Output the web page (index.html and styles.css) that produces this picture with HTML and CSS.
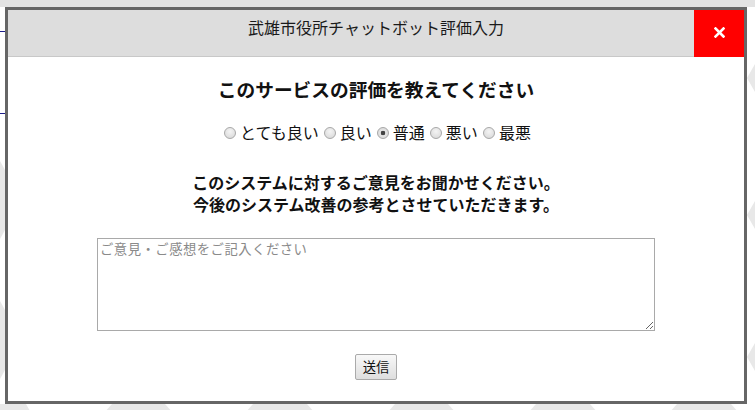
FILE: index.html
```html
<!DOCTYPE html>
<html>
<head>
    <title>武雄市役所チャットボット評価入力</title>
    <link rel="stylesheet" href="styles.css">
</head>
<body>
    <!-- page behind the dialog -->
    <svg class="backdrop" width="755" height="410" viewBox="0 0 755 410">
        <rect x="0" y="0" width="755" height="7" fill="#e3e3e3"/>
        <line x1="0" y1="31.5" x2="6" y2="31.5" stroke="#1c1c8a"/>
        <line x1="0" y1="113.5" x2="6" y2="113.5" stroke="#1c1c8a"/>
        <g fill="#e8e8e8">
            <polygon points="747,78 763,50 795,50 811,78 795,106 763,106"/>
            <polygon points="747,215 763,187 795,187 811,215 795,243 763,243"/>
            <polygon points="747,357 763,329 795,329 811,357 795,385 763,385"/>
            <polygon points="-10,404 26,404 42,432 26,460 -10,460"/>
            <polygon points="112,404 165,404 190,432 165,460 112,460 87,432"/>
            <polygon points="253,404 307,404 332,432 307,460 253,460 228,432"/>
            <polygon points="395,404 448,404 473,432 448,460 395,460 370,432"/>
            <polygon points="536,404 590,404 615,432 590,460 536,460 511,432"/>
            <polygon points="677,404 731,404 756,432 731,460 677,460 652,432"/>
            <polygon points="-6,150 5,170 5,230 -6,250"/>
            <polygon points="-6,290 5,310 5,370 -6,390"/>
        </g>
    </svg>

    <div class="modal">
        <div class="modal-header">
            <span class="modal-title">武雄市役所チャットボット評価入力</span>
            <button class="close-button" type="button">
                <svg width="11" height="11" viewBox="0 0 11 11">
                    <path d="M1.5 1.5 L9.5 9.5 M9.5 1.5 L1.5 9.5" stroke="#fff" stroke-width="2.6" stroke-linecap="square"/>
                </svg>
            </button>
        </div>
        <div class="modal-body">
            <h3 class="question">このサービスの評価を教えてください</h3>
            <div class="rating">
                <label class="rating-item"><input type="radio" name="rating">とても良い</label>
                <label class="rating-item"><input type="radio" name="rating">良い</label>
                <label class="rating-item"><input type="radio" name="rating" checked>普通</label>
                <label class="rating-item"><input type="radio" name="rating">悪い</label>
                <label class="rating-item"><input type="radio" name="rating">最悪</label>
            </div>
            <div class="message">
                <span class="message-line">このシステムに対するご意見をお聞かせください。</span>
                <span class="message-line">今後のシステム改善の参考とさせていただきます。</span>
            </div>
            <textarea class="comment" placeholder="ご意見・ご感想をご記入ください"></textarea>
            <button class="send-button" type="button">送信</button>
        </div>
    </div>
</body>
</html>
```

FILE: styles.css
```css
body {
    margin: 0;
    width: 755px;
    height: 410px;
    overflow: hidden;
    position: relative;
    background-color: #fff;
    font-family: "Noto Sans CJK JP", "Liberation Sans", sans-serif;
    color: #111;
}
.backdrop {
    position: absolute;
    left: 0;
    top: 0;
}
.modal {
    position: relative;
    margin: 7px 0 0 5px;
    width: 736px;
    height: 391px;
    border: 3px solid #666;
    background-color: #fff;
}
.modal-header {
    height: 46px;
    background-color: #dddddd;
    border-bottom: 1px solid #c8c8c8;
    display: flex;
    justify-content: center;
    position: relative;
}
.modal-title {
    font-size: 16px;
    line-height: 23px;
    padding-top: 6px;
    color: #1a1a1a;
}
.close-button {
    position: absolute;
    right: 0;
    top: 0;
    width: 50px;
    height: 47px;
    border: none;
    background-color: #ff0000;
    padding: 0 0 2px 1px;
    display: flex;
    align-items: center;
    justify-content: center;
}
.modal-body {
    display: flex;
    flex-direction: column;
    align-items: center;
}
.question {
    font-size: 18.72px;
    font-weight: bold;
    line-height: 24px;
    margin: 20px 0 0 0;
}
.rating {
    display: flex;
    gap: 5px;
    margin-top: 21px;
    font-size: 16px;
    line-height: 20px;
    padding-left: 3px;
}
.rating-item {
    display: flex;
    align-items: center;
    gap: 4px;
}
.rating-item input {
    appearance: none;
    box-sizing: border-box;
    width: 12px;
    height: 12px;
    margin: 1px 0 0 0;
    border: 1px solid #a8a8a8;
    border-radius: 50%;
    background: radial-gradient(circle at 50% 35%, #f4f4f4, #d6d6d6);
}
.rating-item input:checked {
    background: radial-gradient(circle, #444 0, #444 2px, #e6e6e6 2.6px, #d2d2d2);
}
.message {
    display: flex;
    flex-direction: column;
    align-items: center;
    margin-top: 29px;
    font-size: 16px;
    font-weight: bold;
}
.message-line {
    line-height: 22px;
}
.comment {
    box-sizing: border-box;
    width: 558px;
    height: 93px;
    margin-top: 23px;
    border: 1px solid #a9a9a9;
    padding: 2px;
    font-family: "Noto Sans CJK JP", monospace;
    font-size: 13.33px;
    line-height: 16px;
    letter-spacing: 0.5px;
}
.comment::placeholder {
    color: #8a8a8a;
}
.send-button {
    margin-top: 23px;
    padding: 3px 7px;
    font-family: "Noto Sans CJK JP", sans-serif;
    font-size: 13.33px;
    line-height: 18px;
    color: #111;
    border: 1px solid #aaa;
    border-radius: 2px;
    background: linear-gradient(#f8f8f8, #dedede);
}
```
